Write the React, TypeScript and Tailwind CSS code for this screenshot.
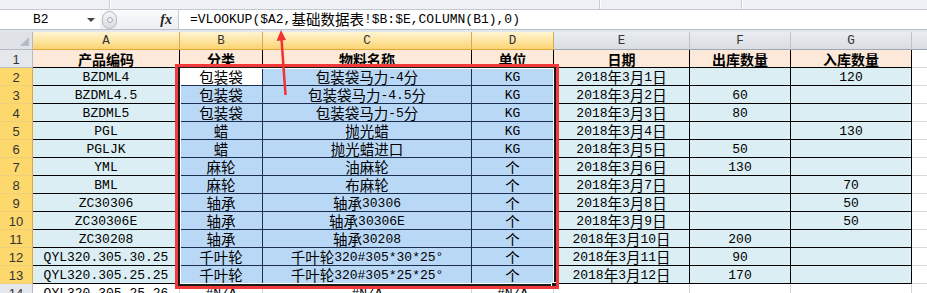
import React from 'react'

const GRID = 'grid grid-cols-[33px_147px_83px_209px_82px_136px_101px_121px_15px] grid-rows-[18px] h-[18px]'
const LETTERS = ['A', 'B', 'C', 'D', 'E', 'F', 'G']
const HEAD = ['产品编码', '分类', '物料名称', '单位', '日期', '出库数量', '入库数量']

const ROWS: string[][] = [
  ['BZDML4', '包装袋', '包装袋马力-4分', 'KG', '2018年3月1日', '', '120'],
  ['BZDML4.5', '包装袋', '包装袋马力-4.5分', 'KG', '2018年3月2日', '60', ''],
  ['BZDML5', '包装袋', '包装袋马力-5分', 'KG', '2018年3月3日', '80', ''],
  ['PGL', '蜡', '抛光蜡', 'KG', '2018年3月4日', '', '130'],
  ['PGLJK', '蜡', '抛光蜡进口', 'KG', '2018年3月5日', '50', ''],
  ['YML', '麻轮', '油麻轮', '个', '2018年3月6日', '130', ''],
  ['BML', '麻轮', '布麻轮', '个', '2018年3月7日', '', '70'],
  ['ZC30306', '轴承', '轴承30306', '个', '2018年3月8日', '', '50'],
  ['ZC30306E', '轴承', '轴承30306E', '个', '2018年3月9日', '', '50'],
  ['ZC30208', '轴承', '轴承30208', '个', '2018年3月10日', '200', ''],
  ['QYL320.305.30.25', '千叶轮', '千叶轮320#305*30*25°', '个', '2018年3月11日', '90', ''],
  ['QYL320.305.25.25', '千叶轮', '千叶轮320#305*25*25°', '个', '2018年3月12日', '170', ''],
]

// splits latin / CJK runs so each gets its own font and size
function Txt({ s, bold }: { s: string; bold?: boolean }) {
  const parts = s.split(/([\u3000-\u9fff\uff00-\uffef]+)/)
  return (
    <>
      {parts.map((p, i) =>
        p === '' ? null : i % 2 ? (
          <span
            key={i}
            className={`font-['Noto_Sans_CJK_SC',sans-serif] ${bold ? 'text-[14px] font-bold' : 'text-[14.5px]'}`}
          >
            {p}
          </span>
        ) : (
          <span key={i} className="font-['Liberation_Mono',monospace] text-[13px]">
            {p}
          </span>
        )
      )}
    </>
  )
}

const cell =
  'h-[18px] flex items-center justify-center pt-px border-solid border-r-[1px] border-b-[1px] whitespace-nowrap leading-none text-[#000]'

function RowHead({ n, active }: { n: number; active: boolean }) {
  return (
    <div
      className={`h-[18px] flex items-center justify-center pt-px border-solid border-r-[1px] border-b-[1px] font-['Liberation_Sans',sans-serif] text-[13px] leading-none text-[#333] ${
        active ? 'bg-[#fdd86c] border-r-[#dba844] border-b-[#efcf7c]' : 'bg-[#e4e7eb] border-[#b7bdc6]'
      }`}
    >
      {n}
    </div>
  )
}

export default function App() {
  return (
    <div className="relative w-[927px] h-[293px] overflow-hidden bg-white">
      {/* ribbon bottom edge */}
      <div className="h-[10px] flex bg-[#eef1f5] border-b border-[#c3c8d0]">
        <div className="w-[110px] border-r border-[#c9ced6]" />
        <div className="w-[490px] border-l border-white border-r border-r-[#c9ced6]" />
        <div className="w-[142px] border-l border-white border-r border-r-[#c9ced6]" />
        <div className="flex-1 border-l border-white" />
      </div>

      {/* formula bar */}
      <div className="h-[20px] flex border-b border-[#b9bfc8] bg-white">
        <div className="w-[100px] flex items-center pl-[33px] pr-[5px] leading-none">
          <Txt s="B2" />
          <div className="ml-auto w-0 h-0 border-l-[4px] border-r-[4px] border-t-[4px] border-l-transparent border-r-transparent border-t-[#444]" />
        </div>
        <div className="w-[78px] flex items-center bg-gradient-to-b from-[#fbfbfc] to-[#eceef1]">
          <div className="ml-[2px] w-[15px] h-[18px] rounded-full border border-[#b3b8c0] bg-gradient-to-b from-[#f4f5f7] to-[#d9dce1] flex items-center justify-center">
            <div className="w-[6px] h-[6px] rounded-full border border-[#a7adb6] bg-[#eef0f2]" />
          </div>
          <span className="ml-auto mr-[6px] font-['Liberation_Serif',serif] italic font-bold text-[14px] text-[#222]">fx</span>
        </div>
        <div className="flex-1 flex items-center pl-[11px] border-l border-[#c5cad1] leading-none">
          <Txt s="=VLOOKUP($A2,基础数据表!$B:$E,COLUMN(B1),0)" />
        </div>
      </div>
      <div className="h-[2px] bg-[#e4e7ec]" />

      {/* column letters */}
      <div className={GRID}>
        <div className="relative bg-[#dfe3e8] border-solid border-r-[1px] border-b-[1px] border-[#b3bac4]">
          <svg className="absolute right-[3px] bottom-[3px]" width="9" height="9" viewBox="0 0 9 9">
            <polygon points="9,0 9,9 0,9" fill="#b5bcc6" />
          </svg>
        </div>
        {LETTERS.map((l, i) => (
          <div
            key={l}
            className={`flex items-center justify-center pt-px border-solid border-r-[1px] border-b-[1px] font-['Liberation_Mono',monospace] text-[12.5px] leading-none text-[#333] ${
              i < 4
                ? 'bg-gradient-to-b from-[#fff5d2] to-[#fbd46f] border-r-[#d5a956] border-b-[#e2a63c]'
                : 'bg-gradient-to-b from-[#e9ecf0] to-[#dadee4] border-r-[#bec4cc] border-b-[#9ea8b5]'
            }`}
          >
            {l}
          </div>
        ))}
        <div className="bg-gradient-to-b from-[#e9ecf0] to-[#dadee4] border-solid border-b-[1px] border-[#9ea8b5]" />
      </div>

      {/* row 1 */}
      <div className={GRID}>
        <RowHead n={1} active={false} />
        {HEAD.map((h) => (
          <div key={h} className={`${cell} bg-[#fde9d9] border-[#000]`}>
            <Txt s={h} bold />
          </div>
        ))}
        <div className="border-solid border-b-[1px] border-[#d9d9d9]" />
      </div>

      {/* data rows */}
      {ROWS.map((r, ri) => (
        <div key={ri} className={GRID}>
          <RowHead n={ri + 2} active />
          {r.map((v, ci) => {
            const sel = ci >= 1 && ci <= 3
            const bg = sel
              ? ri === 0 && ci === 1
                ? 'bg-white border-[#1d2f50]'
                : 'bg-[#b9d8f6] border-[#1d2f50]'
              : 'bg-[#daeef3] border-[#000]'
            return (
              <div key={ci} className={`${cell} ${bg}`}>
                <Txt s={v} />
              </div>
            )
          })}
          <div className="border-solid border-b-[1px] border-[#d9d9d9]" />
        </div>
      ))}

      {/* row 14, cut off */}
      <div className={GRID}>
        <RowHead n={14} active={false} />
        {['QYL320.305.25.26', '#N/A', '#N/A', '#N/A', '', '', ''].map((v, ci) => (
          <div key={ci} className={`${cell} bg-white border-[#d4d4d4]`}>
            <Txt s={v} />
          </div>
        ))}
        <div className="border-solid border-b-[1px] border-[#d9d9d9]" />
      </div>

      {/* selection outline B2:D13 */}
      <div className="absolute left-[178px] top-[66px] w-[378px] h-[220px] border-2 border-[#1a1a1a] shadow-[inset_0_0_0_1px_#fff,0_0_0_1px_#fff]" />
      <div className="absolute left-[551px] top-[282px] w-[6px] h-[6px] bg-[#1a1a1a] border border-white" />

      {/* red annotation */}
      <div className="absolute left-[175px] top-[64px] w-[384px] h-[225px] border-[3px] border-[#f23a3a]" />
      <svg className="absolute left-[270px] top-[26px]" width="22" height="72" viewBox="0 0 22 72">
        <line x1="11.5" y1="13" x2="15.5" y2="69" stroke="#f03232" strokeWidth="2.5" />
        <polygon points="11,4 6.5,15 16,14" fill="#f03232" />
      </svg>
    </div>
  )
}
